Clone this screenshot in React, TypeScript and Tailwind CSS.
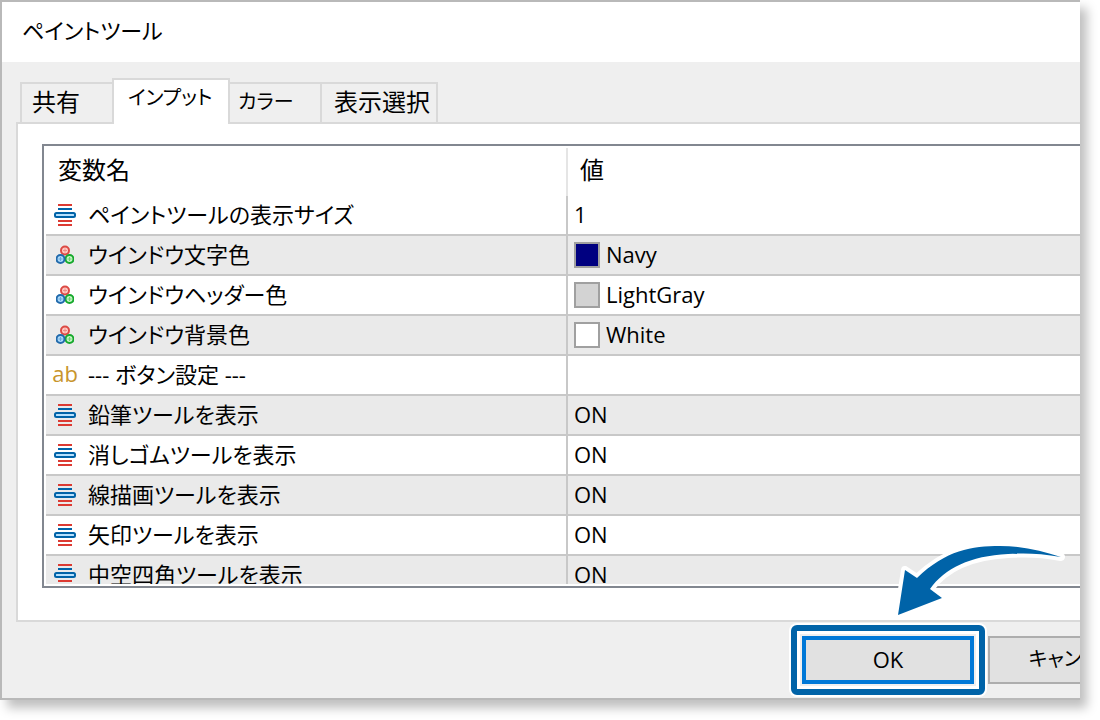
import React, { useState } from "react";

type Kind = "number" | "color" | "text";

interface Param {
  kind: Kind;
  name: string;
  value: string;
  swatch?: string;
}

const TABS = [
  { label: "共有", size: "w-[92px] border-l-2 pl-[10px] text-2xl" },
  { label: "インプット", size: "w-[118px] border-x-2 pl-[14px] text-xl" },
  { label: "カラー", size: "w-[92px] border-r-2 pl-2 text-xl" },
  { label: "表示選択", size: "w-[116px] border-r-2 pl-3 text-2xl" },
];

const PARAMS: Param[] = [
  { kind: "number", name: "ペイントツールの表示サイズ", value: "1" },
  { kind: "color", name: "ウインドウ文字色", value: "Navy", swatch: "bg-[#000080]" },
  { kind: "color", name: "ウインドウヘッダー色", value: "LightGray", swatch: "bg-[#d3d3d3]" },
  { kind: "color", name: "ウインドウ背景色", value: "White", swatch: "bg-white" },
  { kind: "text", name: "--- ボタン設定 ---", value: "" },
  { kind: "number", name: "鉛筆ツールを表示", value: "ON" },
  { kind: "number", name: "消しゴムツールを表示", value: "ON" },
  { kind: "number", name: "線描画ツールを表示", value: "ON" },
  { kind: "number", name: "矢印ツールを表示", value: "ON" },
  { kind: "number", name: "中空四角ツールを表示", value: "ON" },
];

const NumberIcon = () => (
  <svg width="22" height="22" viewBox="0 0 22 22" aria-hidden="true">
    <path d="M4 1h14M4 17h14M4 21h14" stroke="#dc3a32" strokeWidth="2" />
    <path d="M4 5h14" stroke="#0063a8" strokeWidth="2" />
    <rect x="1" y="9" width="20" height="4" rx="1.5" fill="#b5e1ff" stroke="#0063a8" strokeWidth="2" />
  </svg>
);

const ColorIcon = () => (
  <svg width="18" height="20" viewBox="0 0 18 20" aria-hidden="true">
    <g strokeWidth="2">
      <circle cx="9" cy="5.5" r="4" fill="#ffc9c4" stroke="#dc4a44" />
      <circle cx="13.5" cy="14" r="4" fill="#c5f5c5" stroke="#16a92c" />
      <circle cx="4.5" cy="14" r="4" fill="#a9d8fa" stroke="#2069ab" />
    </g>
    <path d="M9 3.5v4M7 5.5h4" stroke="#ee8d88" />
    <path d="M13.5 12v4M11.5 14h4" stroke="#6dd277" />
    <path d="M4.5 12v4M2.5 14h4" stroke="#68a7d8" />
  </svg>
);

const KindIcon: React.FC<{ kind: Kind }> = ({ kind }) => {
  if (kind === "number") return <NumberIcon />;
  if (kind === "color") return <ColorIcon />;
  return <span className="pb-1 leading-6 text-[#c8952c]">ab</span>;
};

const PointerArrow = () => (
  <svg
    className="pointer-events-none absolute right-2 bottom-[72px]"
    width="184"
    height="88"
    viewBox="888 538 184 88"
    aria-hidden="true"
  >
    <path
      d="M898 615L905 570L917 578C946 550 972 546 1000 546C1022 546 1042 551 1061 557C1040 553 1022 553 1008 554C970 556 945 568 930 589L942 598Z"
      fill="#0063a8"
      stroke="#ffffff"
      strokeWidth="8"
      strokeLinejoin="round"
      paintOrder="stroke"
    />
  </svg>
);

export default function App() {
  const [active, setActive] = useState("インプット");

  return (
    <div className="bg-white pr-5 pb-5 font-['Open_Sans','Noto_Sans_CJK_JP',sans-serif] text-[22px] leading-8 text-black [font-feature-settings:'palt']">
      <div className="shadow-[7px_8px_10px_rgba(0,0,0,0.25)]">
        <main className="relative overflow-hidden border-t-2 border-b-2 border-l-2 border-[#b9b9b9] bg-[#efefef]">
          <header className="flex h-[60px] items-center bg-white pb-1 pl-5">
            <h1>ペイントツール</h1>
          </header>

          <div className="pt-4 pl-[14px]">
            <div role="tablist" className="relative z-10 -mb-[2px] flex items-end pl-1">
              {TABS.map((tab) => (
                <button
                  key={tab.label}
                  type="button"
                  role="tab"
                  aria-selected={active === tab.label}
                  onClick={() => setActive(tab.label)}
                  className={`border-t-2 border-[#d9d9d9] text-left leading-8 whitespace-nowrap ${tab.size} ${
                    active === tab.label ? "h-[46px] bg-white pb-2" : "h-[42px] border-b-2 pb-[2px]"
                  }`}
                >
                  {tab.label}
                </button>
              ))}
            </div>

            <section className="border-y-2 border-l-2 border-[#d9d9d9] bg-white pt-5 pb-8 pl-6">
              <div className="border-y-2 border-l-2 border-[#828790] py-[2px] pl-[2px]">
                <div className="h-[436px] overflow-hidden">
                  <table className="w-full table-fixed border-separate border-spacing-0">
                    <thead>
                      <tr className="h-12 text-left text-2xl leading-8">
                        <th className="w-[522px] border-r-2 border-[#e5e5e5] pb-1 pl-3 font-normal">変数名</th>
                        <th className="pb-1 pl-3 font-normal">値</th>
                      </tr>
                    </thead>
                    <tbody>
                      {PARAMS.map((param) => (
                        <tr key={param.name} className="h-10 even:bg-[#eaeaea]">
                          <td className="border-r-2 border-b-2 border-[#c8c8c8]">
                            <div className="flex items-center">
                              <span className="flex w-[38px] shrink-0 justify-center">
                                <KindIcon kind={param.kind} />
                              </span>
                              <span className="pb-[2px] pl-1 whitespace-nowrap">{param.name}</span>
                            </div>
                          </td>
                          <td className="border-b-2 border-[#c8c8c8] pl-[6px]">
                            <div className="flex items-center gap-[6px]">
                              {param.swatch && (
                                <span className={`size-[26px] border-2 border-[#a0a0a0] ${param.swatch}`} />
                              )}
                              <span className="pb-[2px]">{param.value}</span>
                            </div>
                          </td>
                        </tr>
                      ))}
                    </tbody>
                  </table>
                </div>
              </div>
            </section>
          </div>

          <footer className="-mr-20 flex justify-end gap-[14px] pt-[14px] pb-[14px]">
            <div className="relative">
              <button type="button" className="h-12 w-[172px] border-4 border-[#0078d7] bg-[#e1e1e1] pb-[2px]">
                OK
              </button>
              <span className="pointer-events-none absolute -inset-[11px] rounded-md border-6 border-[#0063a8] shadow-[0_0_0_2px_#ffffff,inset_0_0_0_3px_#ffffff]" />
            </div>
            <button type="button" className="h-12 w-[172px] border-2 border-[#adadad] bg-[#e1e1e1] pb-[2px] text-xl">
              キャンセル
            </button>
          </footer>

          <PointerArrow />
        </main>
      </div>
    </div>
  );
}
